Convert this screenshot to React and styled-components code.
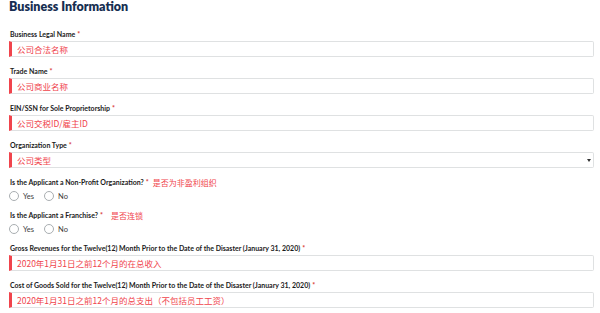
import React from "react";
import styled, { createGlobalStyle } from "styled-components";

const Global = createGlobalStyle`
  html, body { margin: 0; padding: 0; background: #fff; }
  body { font-family: "Lato", "Noto Sans CJK SC", sans-serif; }
  * { box-sizing: border-box; }
`;

const Page = styled.div`
  width: 600px;
  height: 313px;
  overflow: hidden;
  padding: 0 6px 0 9px;
  display: flex;
  flex-direction: column;
`;

const Title = styled.h2`
  margin: 0 0 16px 0;
  font-family: "Lato", sans-serif;
  font-weight: 800;
  font-size: 12.5px;
  line-height: 13px;
  color: #162e51;
`;

const Field = styled.div`
  display: flex;
  flex-direction: column;
  gap: ${(p) => p.$gap ?? 2}px;
  margin-bottom: 9px;
`;

const Label = styled.div`
  display: flex;
  align-items: center;
  height: 10px;
  padding-left: 1px;
  font-family: "Lato", sans-serif;
  font-weight: 700;
  font-size: 7px;
  color: #1b1b1b;
  white-space: nowrap;
`;

const Req = styled.span`
  color: #d83933;
  margin-left: 2px;
`;

const Note = styled.span`
  font-family: "Noto Sans CJK SC", sans-serif;
  font-weight: 400;
  font-size: 8px;
  color: #f0444c;
  margin-left: ${(p) => p.$gap ?? 6}px;
`;

const Box = styled.div`
  position: relative;
  height: 16px;
  display: flex;
  align-items: center;
  border: 1px solid #dfe1e2;
  border-left: 3px solid #f0444c;
  padding-left: 5px;
  border-radius: 0 2px 2px 0;
  font-family: "Noto Sans CJK SC", sans-serif;
  font-size: 8.5px;
  color: #f0444c;
`;

const Arrow = styled.span`
  position: absolute;
  right: 2px;
  top: 6px;
  width: 0;
  height: 0;
  border-left: 2px solid transparent;
  border-right: 2px solid transparent;
  border-top: 3px solid #333;
`;

const RadioRow = styled.div`
  display: flex;
  align-items: center;
  height: 10px;
  gap: 10px;
`;

const RadioItem = styled.label`
  display: flex;
  align-items: center;
  gap: 4px;
  font-family: "Lato", sans-serif;
  font-size: 7.5px;
  color: #3d3d3d;
`;

const Circle = styled.span`
  width: 10px;
  height: 10px;
  border-radius: 50%;
  border: 1px solid #a9aeb1;
  background: #fff;
`;

function TextField({ label, value, star = " *", select }) {
  return (
    <Field>
      <Label>
        {label}
        <Req>{star.trim()}</Req>
      </Label>
      <Box>
        {value}
        {select && <Arrow />}
      </Box>
    </Field>
  );
}

function RadioField({ label, note, noteGap }) {
  return (
    <Field $gap={4}>
      <Label>
        {label}
        <Req>*</Req>
        <Note $gap={noteGap}>{note}</Note>
      </Label>
      <RadioRow>
        <RadioItem>
          <Circle />
          Yes
        </RadioItem>
        <RadioItem>
          <Circle />
          No
        </RadioItem>
      </RadioRow>
    </Field>
  );
}

export default function App() {
  return (
    <>
      <Global />
      <Page>
        <Title>Business Information</Title>
        <TextField label="Business Legal Name" value="公司合法名称" />
        <TextField label="Trade Name" value="公司商业名称" />
        <TextField label="EIN/SSN for Sole Proprietorship" value="公司交税ID/雇主ID" />
        <TextField label="Organization Type" value="公司类型" select />
        <RadioField label="Is the Applicant a Non-Profit Organization?" note="是否为非盈利组织" noteGap={4} />
        <RadioField label="Is the Applicant a Franchise?" note="是否连锁" noteGap={8} />
        <TextField
          label="Gross Revenues for the Twelve(12) Month Prior to the Date of the Disaster (January 31, 2020)"
          value="2020年1月31日之前12个月的在总收入"
        />
        <TextField
          label="Cost of Goods Sold for the Twelve(12) Month Prior to the Date of the Disaster (January 31, 2020)"
          value="2020年1月31日之前12个月的总支出（不包括员工工资）"
        />
      </Page>
    </>
  );
}
